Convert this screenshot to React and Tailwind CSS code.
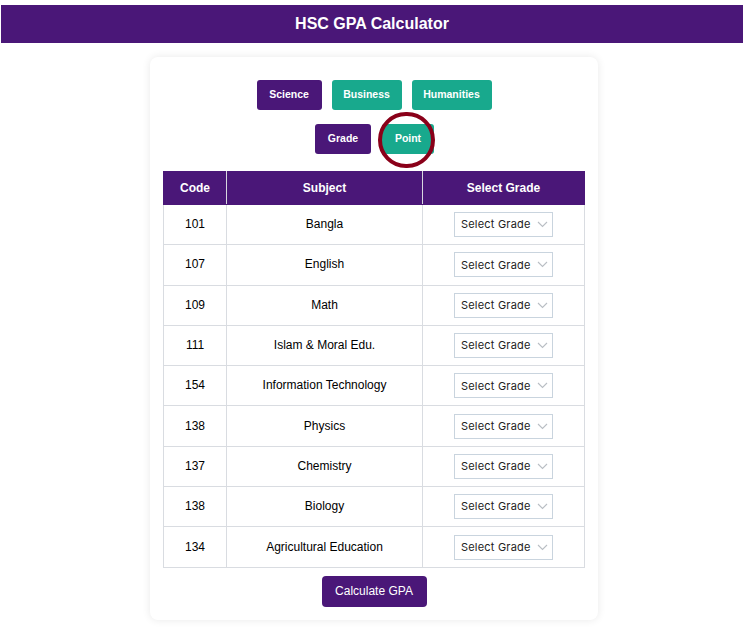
import React from "react";

const subjects = [
  ["101", "Bangla"],
  ["107", "English"],
  ["109", "Math"],
  ["111", "Islam & Moral Edu."],
  ["154", "Information Technology"],
  ["138", "Physics"],
  ["137", "Chemistry"],
  ["138", "Biology"],
  ["134", "Agricultural Education"],
];

function GradeSelect() {
  return (
    <div className="mx-auto flex h-[25px] w-[99px] items-center justify-between border border-[#c9d4de] bg-white pl-[6px] pr-[4px]">
      <span className="text-[11px] tracking-[0.2px] text-[#222] [font-family:Inter,'DejaVu_Sans',sans-serif]">Select Grade</span>
      <svg width="11" height="7" viewBox="0 0 11 7" fill="none">
        <path d="M1 1l4.5 4.5L10 1" stroke="#b9bec4" strokeWidth="1.1" />
      </svg>
    </div>
  );
}

export default function App() {
  return (
    <div className="min-h-[627px] bg-white pt-[5px] [font-family:'Liberation_Sans',Arial,sans-serif]">
      <header className="mx-[1px] flex h-[38px] items-center justify-center bg-[#4a1778]">
        <h1 className="text-[16px] font-bold text-white">HSC GPA Calculator</h1>
      </header>

      <div className="flex justify-center pl-[4px] pt-[14px]">
        <div className="w-[448px] rounded-[8px] bg-white px-[13px] pb-[13px] pt-[23px] shadow-[0_0_8px_rgba(0,0,0,0.09)]">
          <div className="flex justify-center gap-[10px]">
            <button className="h-[30px] w-[65px] rounded-[3px] bg-[#4a1778] text-[10.5px] font-bold text-white">Science</button>
            <button className="h-[30px] w-[70px] rounded-[3px] bg-[#18a98d] text-[10.5px] font-bold text-white">Business</button>
            <button className="h-[30px] w-[80px] rounded-[3px] bg-[#18a98d] text-[10.5px] font-bold text-white">Humanities</button>
          </div>
          <div className="mt-[14px] flex justify-center gap-[11px] pl-[1px]">
            <button className="h-[30px] w-[56px] rounded-[3px] bg-[#4a1778] text-[10.5px] font-bold text-white">Grade</button>
            <div className="relative">
              <button className="h-[30px] w-[52px] rounded-[3px] bg-[#18a98d] text-[10.5px] font-bold text-white">Point</button>
              <span className="pointer-events-none absolute left-[-4px] top-[-12px] h-[56px] w-[57px] rounded-full border-[4px] border-[#8a0019]"></span>
            </div>
          </div>

          <table className="mt-[17px] w-full border-collapse text-[12px] text-black">
            <thead>
              <tr className="h-[33px] bg-[#4a1778] text-white">
                <th className="w-[63px] border border-[#4a1778] border-r-[#d7d7df] font-bold">Code</th>
                <th className="w-[196px] border border-[#4a1778] border-r-[#d7d7df] font-bold">Subject</th>
                <th className="border border-[#4a1778] font-bold">Select Grade</th>
              </tr>
            </thead>
            <tbody>
              {subjects.map(([code, name], i) => (
                <tr key={i} className="h-[40.3px]">
                  <td className="border border-[#d9dce1] pb-[1px] text-center">{code}</td>
                  <td className="border border-[#d9dce1] pb-[1px] text-center">{name}</td>
                  <td className="border border-[#d9dce1] text-center">
                    <GradeSelect />
                  </td>
                </tr>
              ))}
            </tbody>
          </table>

          <div className="mt-[8px] flex justify-center">
            <button className="h-[31px] w-[105px] rounded-[4px] bg-[#4a1778] text-[12px] text-white">Calculate GPA</button>
          </div>
        </div>
      </div>
    </div>
  );
}
